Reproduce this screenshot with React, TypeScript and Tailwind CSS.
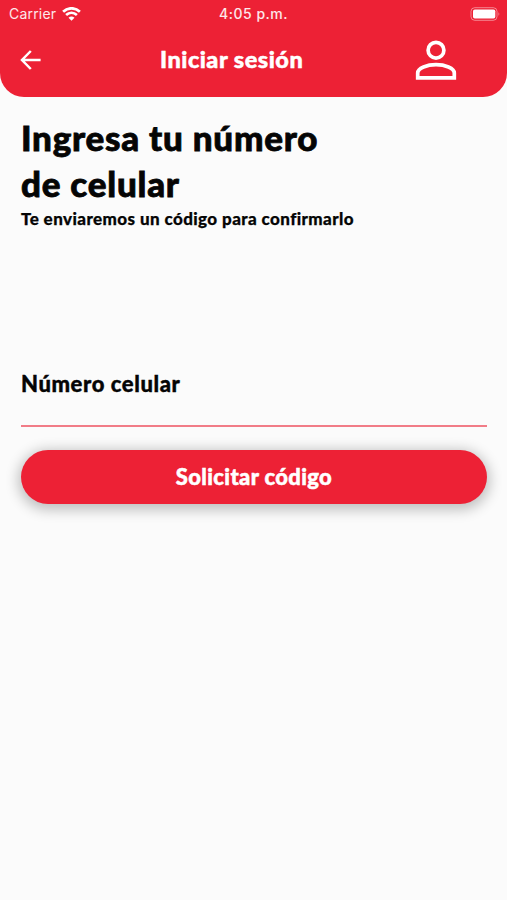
function StatusBar() {
  return (
    <div className="grid h-7 grid-cols-3 items-center pl-[9px] pr-[6px] font-['Inter','Liberation_Sans',sans-serif] text-[14px] leading-none text-white/90">
      <div className="flex items-center gap-[6px]">
        <span className="tracking-[0.2px]">Carrier</span>
        <svg width="19" height="14" viewBox="0 0 19 14" fill="none" stroke="white" strokeWidth="2.7">
          <path d="M1.1 4.8C5.9.1 13.1.1 17.9 4.8" />
          <path d="M4.1 8.1c3.2-3 7.6-3 10.8 0" />
          <path d="M9.5 13.7 6.5 10.8q3-2.5 6 0z" fill="white" stroke="none" />
        </svg>
      </div>
      <span className="-ml-[3px] whitespace-nowrap text-center font-medium tracking-[0.5px]">4:05 p.m.</span>
      <svg className="justify-self-end" width="31" height="14" viewBox="0 0 31 14">
        <rect x="1" y=".7" width="26" height="12.6" rx="3.7" fill="none" stroke="white" strokeOpacity=".45" />
        <rect x="3" y="2.5" width="22.3" height="9" rx="1.8" fill="white" />
        <path d="M28.5 5v4q1.7-2 0-4" fill="white" fillOpacity=".5" />
      </svg>
    </div>
  );
}

function Header() {
  return (
    <header className="h-[97px] rounded-b-[24px] bg-[#ed2135]">
      <StatusBar />
      <div className="grid h-[64px] grid-cols-[160px_1fr_142px] items-center text-white">
        <button className="ml-[20px] w-fit" aria-label="Volver">
          <svg width="21" height="20" viewBox="0 0 21 20" fill="none" stroke="white" strokeWidth="2.5">
            <path d="M10.8 1 2 10l8.8 9M2 10h18.6" />
          </svg>
        </button>
        <h1 className="whitespace-nowrap text-[23.5px] font-black leading-none tracking-[0.5px] [-webkit-text-stroke:0.5px_currentColor]">
          Iniciar sesión
        </h1>
        <svg className="ml-[50px]" width="42" height="40" viewBox="0 0 42 40" fill="none" stroke="white" strokeWidth="3.7">
          <circle cx="21" cy="10.2" r="7.9" />
          <path d="M2.7 37.9V33c0-5 9.5-8.3 18.3-8.3S39.3 28 39.3 33v4.9z" />
        </svg>
      </div>
    </header>
  );
}

export default function App() {
  return (
    <div className="min-h-screen bg-[#fbfbfb] font-['Lato','Open_Sans',sans-serif] text-[#050505]">
      <Header />
      <main className="pl-[21px] pr-5 pt-[17px]">
        <h2 className="whitespace-nowrap text-[35px] font-black leading-[46px] tracking-[0.76px] [-webkit-text-stroke:0.8px_currentColor]">
          Ingresa tu número
          <br />
          de celular
        </h2>
        <p className="mt-px whitespace-nowrap text-[17px] font-black leading-6 tracking-[0.41px] [-webkit-text-stroke:0.25px_currentColor]">
          Te enviaremos un código para confirmarlo
        </p>
        <label className="mt-[139px] block">
          <span className="block whitespace-nowrap text-[22px] font-black leading-7 tracking-[0.6px] [-webkit-text-stroke:0.4px_currentColor]">
            Número celular
          </span>
          <input className="block h-[29px] w-full border-b-2 border-[#f17c87] bg-transparent outline-none" />
        </label>
        <button className="mt-[23px] block h-[54px] w-full rounded-full bg-[#ed2135] text-[22px] font-black leading-none tracking-[0.35px] text-white shadow-[0_3px_13px_3px_rgba(0,0,0,0.24)] [-webkit-text-stroke:0.5px_currentColor]">
          Solicitar código
        </button>
      </main>
    </div>
  );
}
